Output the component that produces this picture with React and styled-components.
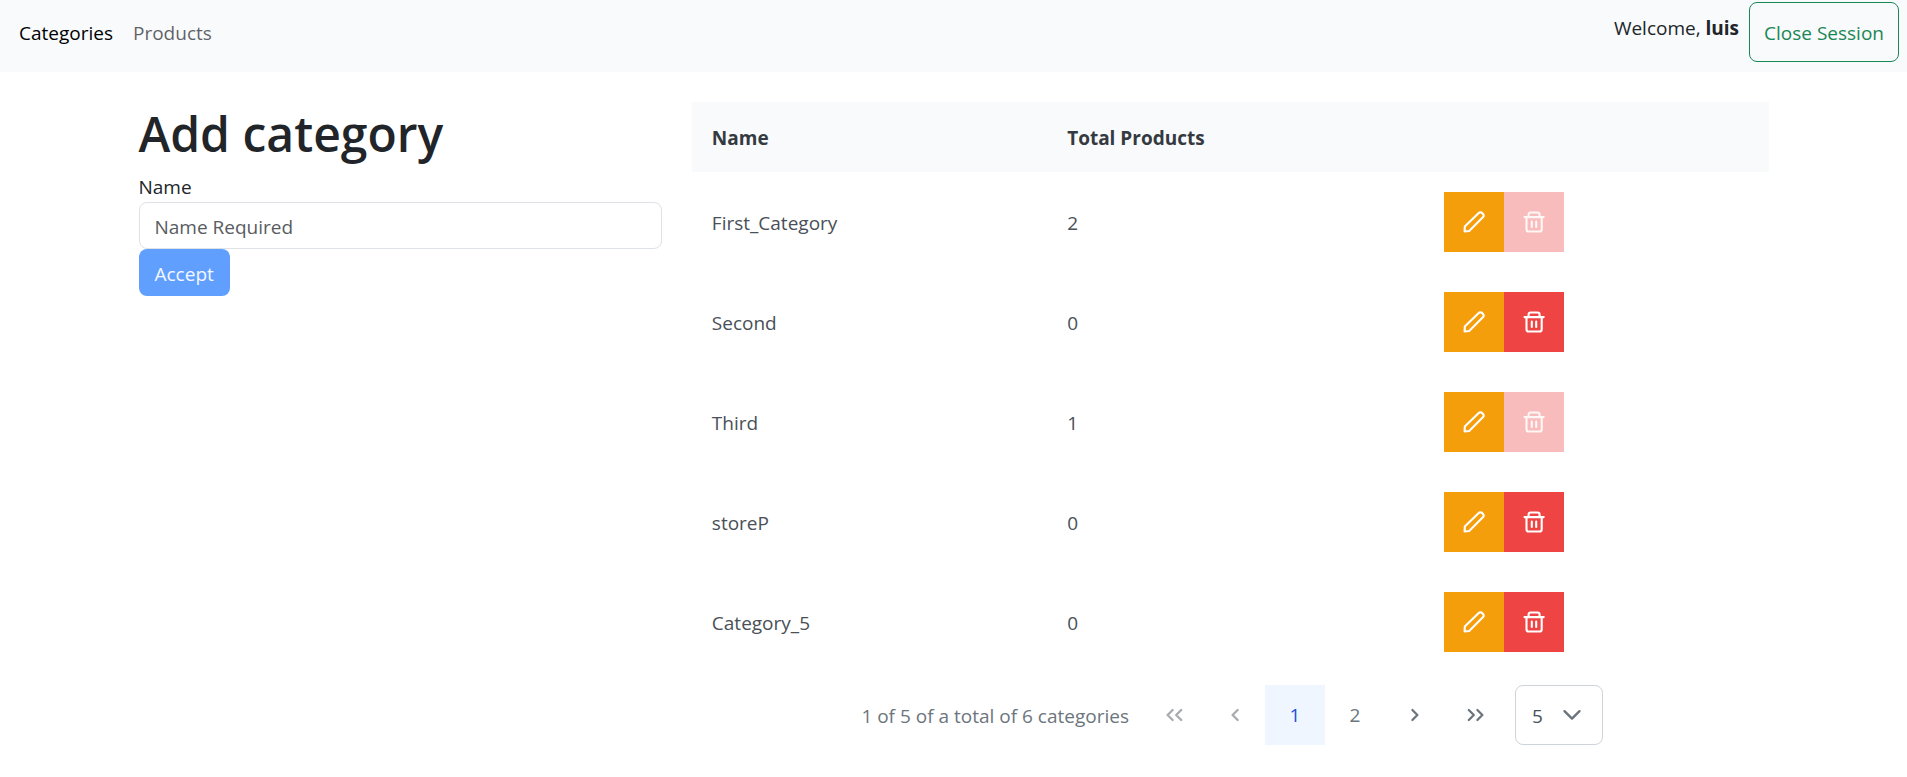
import React, { useState } from 'react';
import styled, { createGlobalStyle } from 'styled-components';

const GlobalStyle = createGlobalStyle`
  *, *::before, *::after { box-sizing: border-box; }
  body {
    margin: 0;
    background: #fff;
    color: #212529;
    font-family: "Segoe UI", "Open Sans", "Noto Sans", sans-serif;
    font-size: 19px;
    line-height: 30px;
  }
  button, input, select { font: inherit; color: inherit; }
`;

const Navbar = styled.header`
  display: flex;
  justify-content: space-between;
  align-items: flex-start;
  min-height: 72px;
  padding: 2px 8px 10px 19px;
  background: #f8fafc;
`;

const NavLinks = styled.nav`
  display: flex;
  gap: 20px;
  padding-top: 16px;
`;

const NavLink = styled.a`
  color: ${(p) => (p.$active ? '#000' : 'rgba(33, 37, 41, 0.72)')};
  text-decoration: none;
`;

const Session = styled.div`
  display: flex;
  gap: 10px;
`;

const Welcome = styled.span`
  padding-top: 11px;
`;

const SessionButton = styled.button`
  height: 60px;
  padding: 2px 14px 0;
  border: 1px solid #198754;
  border-radius: 8px;
  background: transparent;
  color: #198754;
  cursor: pointer;
`;

const Main = styled.main`
  display: grid;
  grid-template-columns: minmax(0, 1fr) minmax(0, 2fr);
  max-width: 1660px;
  margin: 0 auto;
  padding-top: 30px;
  @media (max-width: 900px) { grid-template-columns: minmax(0, 1fr); }
`;

const Column = styled.section`
  padding: 0 15px;
`;

const Form = styled.form`
  display: flex;
  flex-direction: column;
  align-items: flex-start;
`;

const Title = styled.h1`
  margin: 0;
  padding: 2px 0 8px;
  font-size: 48px;
  line-height: 60px;
  font-weight: 600;
`;

const TextInput = styled.input`
  width: 100%;
  height: 47px;
  padding: 2px 15px 0;
  border: 1px solid #dee2e6;
  border-radius: 8px;
  background: #fff;
  &::placeholder { color: #595c5f; opacity: 1; }
`;

const AcceptButton = styled.button`
  height: 47px;
  padding: 2px 16px 0;
  border: 0;
  border-radius: 8px;
  background: #619fff;
  color: #f4f8ff;
  font-weight: 500;
`;

const Table = styled.table`
  width: 100%;
  table-layout: fixed;
  border-collapse: collapse;
  color: #495057;
`;

const HeadCell = styled.th`
  width: ${(p) => p.$width};
  height: 70px;
  padding: 2px 20px 0;
  background: #f8fafc;
  color: #343a40;
  text-align: left;
  font-weight: 700;
`;

const Cell = styled.td`
  height: 100px;
  padding: 2px 20px 0;
`;

const ActionCell = styled(Cell)`
  padding: 0 20px;
`;

const Actions = styled.div`
  display: flex;
`;

const ActionButton = styled.button`
  display: grid;
  place-items: center;
  width: 60px;
  height: 60px;
  padding: 0;
  border: 0;
  background: ${(p) => (p.$danger ? '#ef4444' : '#f59e0b')};
  color: #fff;
  cursor: pointer;
  &:disabled { background: #f8bcbc; color: #fff6f6; cursor: default; }
`;

const Paginator = styled.div`
  display: flex;
  flex-wrap: wrap;
  justify-content: center;
  align-items: center;
  padding: 13px 20px 13px 24px;
  color: #6c757d;
`;

const Report = styled.span`
  padding-top: 2px;
  margin-right: 16px;
`;

const PageButton = styled.button`
  display: grid;
  place-items: center;
  width: 60px;
  height: 60px;
  padding: 0;
  border: 0;
  background: ${(p) => (p.$active ? '#eff6ff' : 'transparent')};
  color: ${(p) => (p.$active ? '#1d4ed8' : '#6c757d')};
  cursor: pointer;
  &:disabled { opacity: 0.6; cursor: default; }
`;

const SelectBox = styled.span`
  display: grid;
  width: 88px;
  height: 60px;
  margin-left: 10px;
  border: 1px solid #ced4da;
  border-radius: 8px;
  color: #6c757d;
  > * { grid-area: 1 / 1; }
  svg { place-self: center end; margin-right: 20px; pointer-events: none; }
`;

const Select = styled.select`
  appearance: none;
  width: 100%;
  padding: 2px 16px 0;
  border: 0;
  border-radius: 8px;
  background: transparent;
  color: #495057;
`;

const Icon = ({ size = 22, width = 2, children }) => (
  <svg width={size} height={size} viewBox={`0 0 ${size} ${size}`} fill="none" stroke="currentColor"
    strokeWidth={width} strokeLinecap="round" strokeLinejoin="round" aria-hidden="true">
    {children}
  </svg>
);

const PencilIcon = () => (
  <Icon width={2.1}>
    <path d="M1.6 20.4 1.8 15.6 15.2 2.4C16.6 1.1 18.4 1.2 19.7 2.4C21 3.7 20.9 5.3 19.6 6.6L6.2 20Z" />
  </Icon>
);

const TrashIcon = () => (
  <Icon width={2.1}>
    <path d="M1.5 6.1H20.7" />
    <path d="M5.6 6V3.4C5.6 2 6.4 1.5 7.7 1.5H14.5C15.8 1.5 16.6 2 16.6 3.4V6" />
    <path d="M3.5 6.2V18.2C3.5 19.6 4.3 20.5 5.7 20.5H16.5C17.9 20.5 18.7 19.6 18.7 18.2V6.2" />
    <path d="M8.8 10.6V16M13.2 10.6V16" />
  </Icon>
);

const ANGLES = {
  first: 'M8.6 6 3.6 11 8.6 16M17.2 6 12.2 11 17.2 16',
  prev: 'M13.6 6 8.6 11 13.6 16',
  next: 'M8.4 6 13.4 11 8.4 16',
  last: 'M4.8 6 9.8 11 4.8 16M13.4 6 18.4 11 13.4 16',
};

const AngleIcon = ({ kind }) => <Icon width={2.3}><path d={ANGLES[kind]} /></Icon>;

const CATEGORIES = [
  { name: 'First_Category', total: 2 },
  { name: 'Second', total: 0 },
  { name: 'Third', total: 1 },
  { name: 'storeP', total: 0 },
  { name: 'Category_5', total: 0 },
];

export default function App() {
  const [name, setName] = useState('');
  const [rows, setRows] = useState('5');
  return (
    <>
      <GlobalStyle />
      <Navbar>
        <NavLinks>
          <NavLink href="#categories" $active>Categories</NavLink>
          <NavLink href="#products">Products</NavLink>
        </NavLinks>
        <Session>
          <Welcome>Welcome, <b>luis</b></Welcome>
          <SessionButton type="button">Close Session</SessionButton>
        </Session>
      </Navbar>
      <Main>
        <Column>
          <Form onSubmit={(e) => e.preventDefault()}>
            <Title>Add category</Title>
            <label htmlFor="name">Name</label>
            <TextInput id="name" placeholder="Name Required" value={name}
              onChange={(e) => setName(e.target.value)} />
            <AcceptButton disabled={!name}>Accept</AcceptButton>
          </Form>
        </Column>
        <Column>
          <Table>
            <thead>
              <tr>
                <HeadCell scope="col" $width="33%">Name</HeadCell>
                <HeadCell scope="col" $width="35%">Total Products</HeadCell>
                <HeadCell scope="col" $width="32%" aria-label="Actions" />
              </tr>
            </thead>
            <tbody>
              {CATEGORIES.map((c) => (
                <tr key={c.name}>
                  <Cell>{c.name}</Cell>
                  <Cell>{c.total}</Cell>
                  <ActionCell>
                    <Actions>
                      <ActionButton type="button" aria-label={`Edit ${c.name}`}><PencilIcon /></ActionButton>
                      <ActionButton type="button" $danger disabled={c.total > 0} aria-label={`Delete ${c.name}`}>
                        <TrashIcon />
                      </ActionButton>
                    </Actions>
                  </ActionCell>
                </tr>
              ))}
            </tbody>
          </Table>
          <Paginator>
            <Report>1 of 5 of a total of 6 categories</Report>
            <PageButton type="button" disabled aria-label="First page"><AngleIcon kind="first" /></PageButton>
            <PageButton type="button" disabled aria-label="Previous page"><AngleIcon kind="prev" /></PageButton>
            <PageButton type="button" $active aria-current="page">1</PageButton>
            <PageButton type="button">2</PageButton>
            <PageButton type="button" aria-label="Next page"><AngleIcon kind="next" /></PageButton>
            <PageButton type="button" aria-label="Last page"><AngleIcon kind="last" /></PageButton>
            <SelectBox>
              <Select aria-label="Rows per page" value={rows} onChange={(e) => setRows(e.target.value)}>
                <option>5</option>
                <option>10</option>
                <option>20</option>
              </Select>
              <Icon size={20} width={2.4}><path d="M2.5 6.2 10 13.6 17.5 6.2" /></Icon>
            </SelectBox>
          </Paginator>
        </Column>
      </Main>
    </>
  );
}
